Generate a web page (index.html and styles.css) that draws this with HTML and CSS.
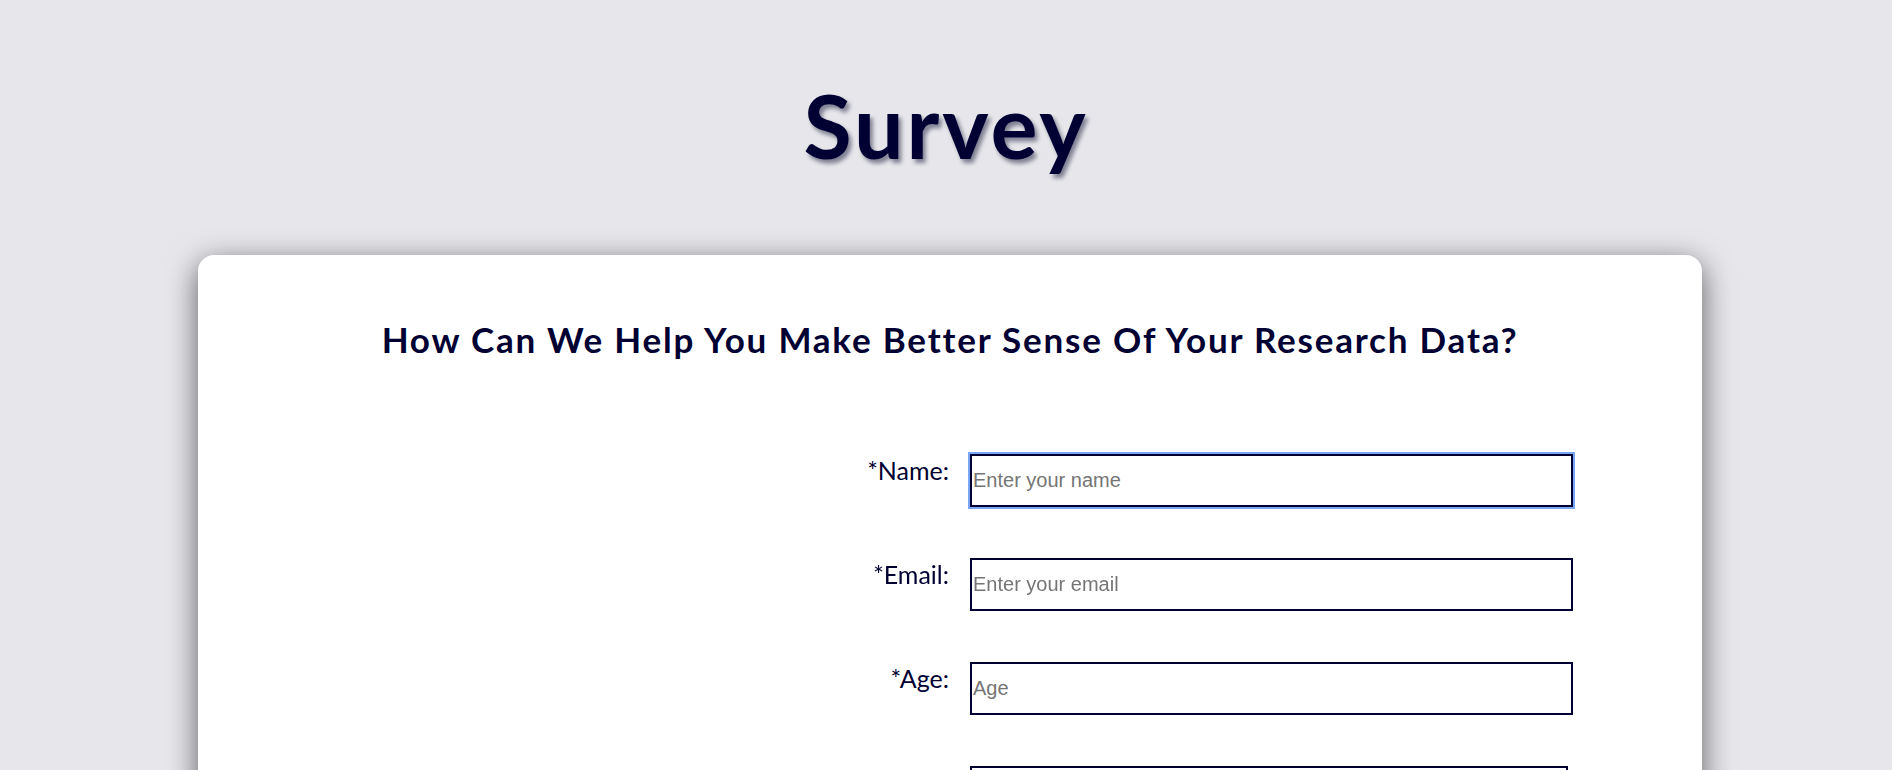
FILE: index.html
```html
<!DOCTYPE html>
<html lang="en">
<head>
<meta charset="utf-8">
<title>Survey</title>
<link rel="stylesheet" href="styles.css">
</head>
<body>
<h1 class="title">Survey</h1>
<main class="card">
  <h2 class="question">How Can We Help You Make Better Sense Of Your Research Data?</h2>
  <form class="form">
    <div class="row">
      <label class="label" for="name">*Name:</label>
      <input class="field" id="name" type="text" placeholder="Enter your name" autofocus>
    </div>
    <div class="row">
      <label class="label" for="email">*Email:</label>
      <input class="field" id="email" type="email" placeholder="Enter your email">
    </div>
    <div class="row">
      <label class="label" for="age">*Age:</label>
      <input class="field" id="age" type="number" placeholder="Age">
    </div>
    <div class="row">
      <label class="label" for="role">*Role:</label>
      <input class="field field-select" id="role" type="text">
    </div>
  </form>
</main>
</body>
</html>
```
FILE: styles.css
```css
html, body {
  margin: 0;
  padding: 0;
}
body {
  background: #e6e6eb;
  color: #000033;
  font-family: Lato, "Open Sans", sans-serif;
  overflow: hidden;
  height: 770px;
}
.title {
  margin: 73px 0 0;
  font-size: 88px;
  line-height: 1.2;
  font-weight: 700;
  letter-spacing: 3px;
  text-align: center;
  color: #000033;
  text-shadow: 3px 4px 4px rgba(0, 0, 40, 0.45);
}
.card {
  box-sizing: border-box;
  width: 1504px;
  margin: 76px 0 0 198px;
  background: #fff;
  border-radius: 16px;
  box-shadow: 0 8px 30px rgba(0, 0, 0, 0.6);
  padding: 63px 0 200px;
}
.question {
  margin: 0;
  font-size: 35px;
  line-height: 1.2;
  font-weight: 700;
  letter-spacing: 1.8px;
  text-align: center;
}
.form {
  margin-top: 94px;
  display: flex;
  flex-direction: column;
  gap: 51px;
}
.row {
  display: flex;
  align-items: flex-start;
}
.label {
  width: 751px;
  text-align: right;
  font-size: 25px;
  line-height: 1.2;
  margin-top: 1px;
}
.field {
  box-sizing: border-box;
  margin-left: 21px;
  width: 603px;
  height: 53px;
  border: 2px solid #000033;
  padding: 0 1px;
  font-family: "Liberation Sans", Arial, sans-serif;
  font-size: 20px;
  color: #000033;
  background: #fff;
  -moz-appearance: textfield;
}
.field-select {
  width: 598px;
}
.field::placeholder {
  color: #757575;
}
.field:focus {
  outline: 2px solid #7aa7f5;
  outline-offset: 0;
}
.field::-webkit-outer-spin-button,
.field::-webkit-inner-spin-button {
  -webkit-appearance: none;
  margin: 0;
}
```
